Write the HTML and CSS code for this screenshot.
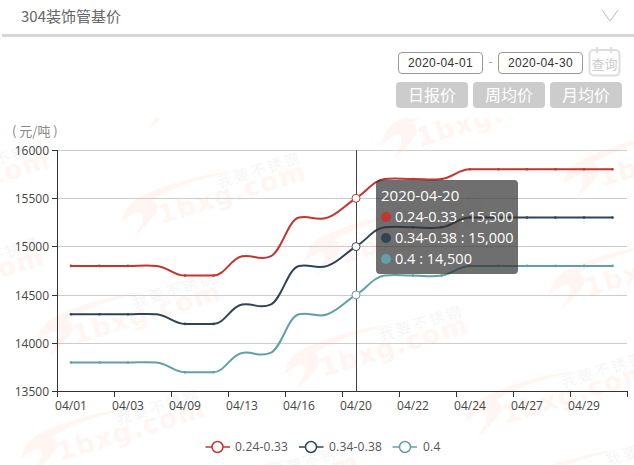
FILE: index.html
```html
<!DOCTYPE html>
<html lang="zh">
<head>
<meta charset="utf-8">
<title>304装饰管基价</title>
<link rel="stylesheet" href="styles.css">
</head>
<body>
<header class="head">
  <h1 class="title">304装饰管基价</h1>
  <svg class="chevron" width="18" height="13" viewBox="0 0 18 13"><path d="M1 1 L9 12 L17 1"/></svg>
</header>
<section class="controls">
  <div class="dates">
    <span class="date">2020-04-01</span>
    <span class="dash">-</span>
    <span class="date">2020-04-30</span>
    <svg class="query" width="32" height="30" viewBox="0 0 32 30">
      <rect x="0.500" y="3" width="30" height="25.500" rx="4"/>
      <path d="M8 0 V6 M22 0 V6 M12 3 H18"/>
      <text class="query-text" x="15.500" y="22">查询</text>
    </svg>
  </div>
  <div class="tabs">
    <span class="tab">日报价</span>
    <span class="tab">周均价</span>
    <span class="tab">月均价</span>
  </div>
</section>
<main class="chart">
  <svg class="plot" width="634" height="347" viewBox="0 118 634 347">
    <defs>
      <g id="mark">
        <path class="wm-shape" d="M2 62 C5 48 12 40 22 36 C50 22 85 14 118 10 C85 17 55 26 32 40 C38 42 40 50 34 56 C30 62 22 70 14 76 C20 68 24 60 22 54 C20 50 14 52 2 62Z"/>
        <text class="wm-brand" transform="translate(41 64) rotate(-17)">1bxg.com</text>
        <text class="wm-cn" transform="translate(99 28) rotate(-17)">我要不锈钢</text>
      </g>
      <g id="series">
        <path class="line" d="M71 265.9 L128 265.9 C139.4 265.9 145.100 265.100 156.500 265.900 C167.900 266.700 173.600 275.600 185 275.600 L213.500 275.600 C224.900 275.600 230.600 258.300 242 256.300 C253.400 254.300 259.100 261.300 270.500 256.300 C281.900 251.300 287.600 220.100 299 217.600 C310.400 215.100 316.100 221.600 327.500 217.600 C338.900 213.600 344.600 205.300 356 198.300 C367.400 191.300 373.100 180.500 384.500 179 C395.900 177.500 401.600 179 413 179 C424.400 179 430.100 180.500 441.500 179 C452.900 177.500 458.600 169.300 470 169.300 L612.500 169.300"/>
        <g class="dots">
          <circle cx="71" cy="265.9" r="1.300"/><circle cx="99.500" cy="265.9" r="1.300"/><circle cx="128" cy="265.9" r="1.300"/>
          <circle cx="185" cy="275.6" r="1.300"/><circle cx="213.500" cy="275.6" r="1.300"/>
          <circle cx="413" cy="179" r="1.300"/><circle cx="441.500" cy="179" r="1.300"/>
          <circle cx="470" cy="169.3" r="1.300"/><circle cx="498.500" cy="169.3" r="1.300"/><circle cx="527" cy="169.3" r="1.300"/>
          <circle cx="555.500" cy="169.3" r="1.300"/><circle cx="584" cy="169.3" r="1.300"/><circle cx="612.500" cy="169.3" r="1.300"/>
        </g>
      </g>
    </defs>

    <g class="watermarks">
      <use href="#mark" x="134" y="54"/>
      <use href="#mark" x="120" y="160"/>
      <use href="#mark" x="35" y="280"/>
      <use href="#mark" x="282" y="313"/>
      <use href="#mark" x="379" y="83"/>
      <use href="#mark" x="547" y="233"/>
      <use href="#mark" x="19" y="397"/>
      <use href="#mark" x="464" y="360"/>
      <use href="#mark" x="302" y="200"/>
      <use href="#mark" x="561" y="123"/>
      <use href="#mark" x="-136" y="148"/>
      <use href="#mark" x="-142" y="245"/>
      <use href="#mark" x="173" y="450"/>
      <use href="#mark" x="509" y="438"/>
    </g>

    <path class="grid" d="M57 150.500 H627 M57 198.500 H627 M57 246.500 H627 M57 295.500 H627 M57 343.500 H627"/>
    <path class="axis" d="M57.500 150 V391.500 M52 150.500 H57 M52 198.500 H57 M52 246.500 H57 M52 295.500 H57 M52 343.500 H57 M52 391.500 H627.500 M57.500 391 V397 M114.500 391 V397 M171.500 391 V397 M228.500 391 V397 M285.500 391 V397 M342.500 391 V397 M399.500 391 V397 M456.500 391 V397 M513.500 391 V397 M570.500 391 V397 M627.500 391 V397"/>

    <text class="unit" x="12" y="136">( 元/吨 )</text>
    <g class="y-labels">
      <text x="49" y="154.500">16000</text>
      <text x="49" y="202.500">15500</text>
      <text x="49" y="251">15000</text>
      <text x="49" y="299.500">14500</text>
      <text x="49" y="347.500">14000</text>
      <text x="49" y="396">13500</text>
    </g>
    <g class="x-labels">
      <text x="71" y="410">04/01</text>
      <text x="128" y="410">04/03</text>
      <text x="185" y="410">04/09</text>
      <text x="242" y="410">04/13</text>
      <text x="299" y="410">04/16</text>
      <text x="356" y="410">04/20</text>
      <text x="413" y="410">04/22</text>
      <text x="470" y="410">04/24</text>
      <text x="527" y="410">04/27</text>
      <text x="584" y="410">04/29</text>
    </g>

    <path class="crosshair" d="M356.500 150 V391"/>

    <use href="#series" class="c-red"/>
    <use href="#series" y="48.300" class="c-navy"/>
    <use href="#series" y="96.600" class="c-teal"/>

    <circle class="pt c-red" cx="356" cy="198.300" r="4"/>
    <circle class="pt c-navy" cx="356" cy="246.600" r="4"/>
    <circle class="pt c-teal" cx="356" cy="294.900" r="4"/>

    <g class="legend">
      <g class="c-red"><path class="lg-line" d="M205.500 447 H230"/><circle class="lg-pt" cx="217.500" cy="447" r="5.500"/></g>
      <text x="235" y="451">0.24-0.33</text>
      <g class="c-navy"><path class="lg-line" d="M299 447 H323.500"/><circle class="lg-pt" cx="311" cy="447" r="5.500"/></g>
      <text x="329" y="451">0.34-0.38</text>
      <g class="c-teal"><path class="lg-line" d="M392.500 447 H417"/><circle class="lg-pt" cx="405" cy="447" r="5.500"/></g>
      <text x="423" y="451">0.4</text>
    </g>
  </svg>

  <div class="tooltip">
    <div class="tip-row tip-head">2020-04-20</div>
    <div class="tip-row"><i class="tip-dot bg-red"></i>0.24-0.33 : 15,500</div>
    <div class="tip-row"><i class="tip-dot bg-navy"></i>0.34-0.38 : 15,000</div>
    <div class="tip-row"><i class="tip-dot bg-teal"></i>0.4 : 14,500</div>
  </div>
</main>
</body>
</html>
```

FILE: styles.css
```css
* { box-sizing: border-box; }

html, body {
  margin: 0;
  padding: 0;
  background: #fff;
  overflow: hidden;
}

body {
  width: 634px;
  height: 465px;
  font-family: "Open Sans", "Noto Sans CJK SC", sans-serif;
}

.head {
  display: flex;
  align-items: center;
  justify-content: space-between;
  height: 37px;
  margin-left: 2px;
  padding: 0 15px 4px 19px;
  border-bottom: 3px solid #d6d6d6;
}

.title {
  margin: 0;
  font-size: 15px;
  font-weight: 400;
  color: #666;
  font-family: "Noto Sans CJK SC", sans-serif;
}

.chevron path {
  fill: none;
  stroke: #bbb;
  stroke-width: 1;
}

.controls {
  display: flex;
  flex-direction: column;
  align-items: flex-end;
  height: 81px;
  padding: 10px 12px 0 0;
  gap: 5px;
}

.dates {
  display: flex;
  align-items: flex-start;
  height: 30px;
  margin-right: 1px;
  padding-top: 5px;
}

.date {
  width: 85px;
  height: 22px;
  border: 1px solid #999;
  border-radius: 4px;
  font-family: "Liberation Sans", sans-serif;
  font-size: 12px;
  letter-spacing: .35px;
  line-height: 20px;
  text-align: center;
  color: #333;
}

.dash {
  width: 15px;
  font-size: 12px;
  line-height: 20px;
  text-align: center;
  color: #999;
}

.query {
  margin: -5px 0 0 6px;
  overflow: visible;
}

.query rect, .query path {
  fill: none;
  stroke: #ddd;
  stroke-width: 2;
}

.query-text {
  font-family: "Noto Sans CJK SC", sans-serif;
  font-size: 13px;
  text-anchor: middle;
  fill: #ccc;
}

.tabs {
  display: flex;
  gap: 5px;
}

.tab {
  width: 72px;
  height: 26px;
  border-radius: 4px;
  background: #ccc;
  color: #fff;
  font-family: "Noto Sans CJK SC", sans-serif;
  font-size: 16px;
  line-height: 25px;
  text-align: center;
}

.chart {
  position: relative;
  height: 347px;
}

.plot {
  display: block;
}

.plot text {
  font-size: 12px;
}

.wm-shape { fill: #fff6f3; }
.plot .wm-brand {
  font-family: "DejaVu Sans", sans-serif;
  font-weight: 700;
  font-size: 26px;
  letter-spacing: 1.500px;
  fill: #fff6f3;
}
.plot .wm-cn {
  font-family: "Noto Sans CJK SC", sans-serif;
  font-size: 15px;
  letter-spacing: 2.500px;
  fill: #f6f6f6;
}

.grid {
  fill: none;
  stroke: #ccc;
  stroke-width: 1;
}

.axis {
  fill: none;
  stroke: #333;
  stroke-width: 1;
}

.crosshair {
  fill: none;
  stroke: #444;
  stroke-width: 1;
}

.unit {
  fill: #888;
  font-family: "Noto Sans CJK SC", sans-serif;
}
.plot .unit { font-size: 13px; }

.y-labels text {
  fill: #444;
  text-anchor: end;
}

.x-labels text {
  fill: #444;
  text-anchor: middle;
}

.c-red { color: #c23531; }
.c-navy { color: #2f4554; }
.c-teal { color: #61a0a8; }

.line {
  fill: none;
  stroke: currentColor;
  stroke-width: 2;
}

.dots circle {
  fill: currentColor;
}

.pt {
  fill: #fff;
  stroke: currentColor;
  stroke-width: 1;
}

.legend text {
  fill: #555;
  letter-spacing: .2px;
}

.lg-line {
  fill: none;
  stroke: currentColor;
  stroke-width: 1.500;
}

.lg-pt {
  fill: #fff;
  stroke: currentColor;
  stroke-width: 1.500;
}

.tooltip {
  position: absolute;
  left: 376px;
  top: 62px;
  width: 142px;
  height: 94px;
  padding: 5px;
  border-radius: 4px;
  background: rgba(50, 50, 50, .7);
  color: #fff;
  font-size: 14.500px;
  line-height: 21px;
  white-space: nowrap;
}

.tip-head {
  font-size: 15px;
}

.tip-dot {
  display: inline-block;
  width: 10px;
  height: 10px;
  margin-right: 4px;
  border-radius: 50%;
}

.bg-red { background: #c23531; }
.bg-navy { background: #2f4554; }
.bg-teal { background: #61a0a8; }
```
